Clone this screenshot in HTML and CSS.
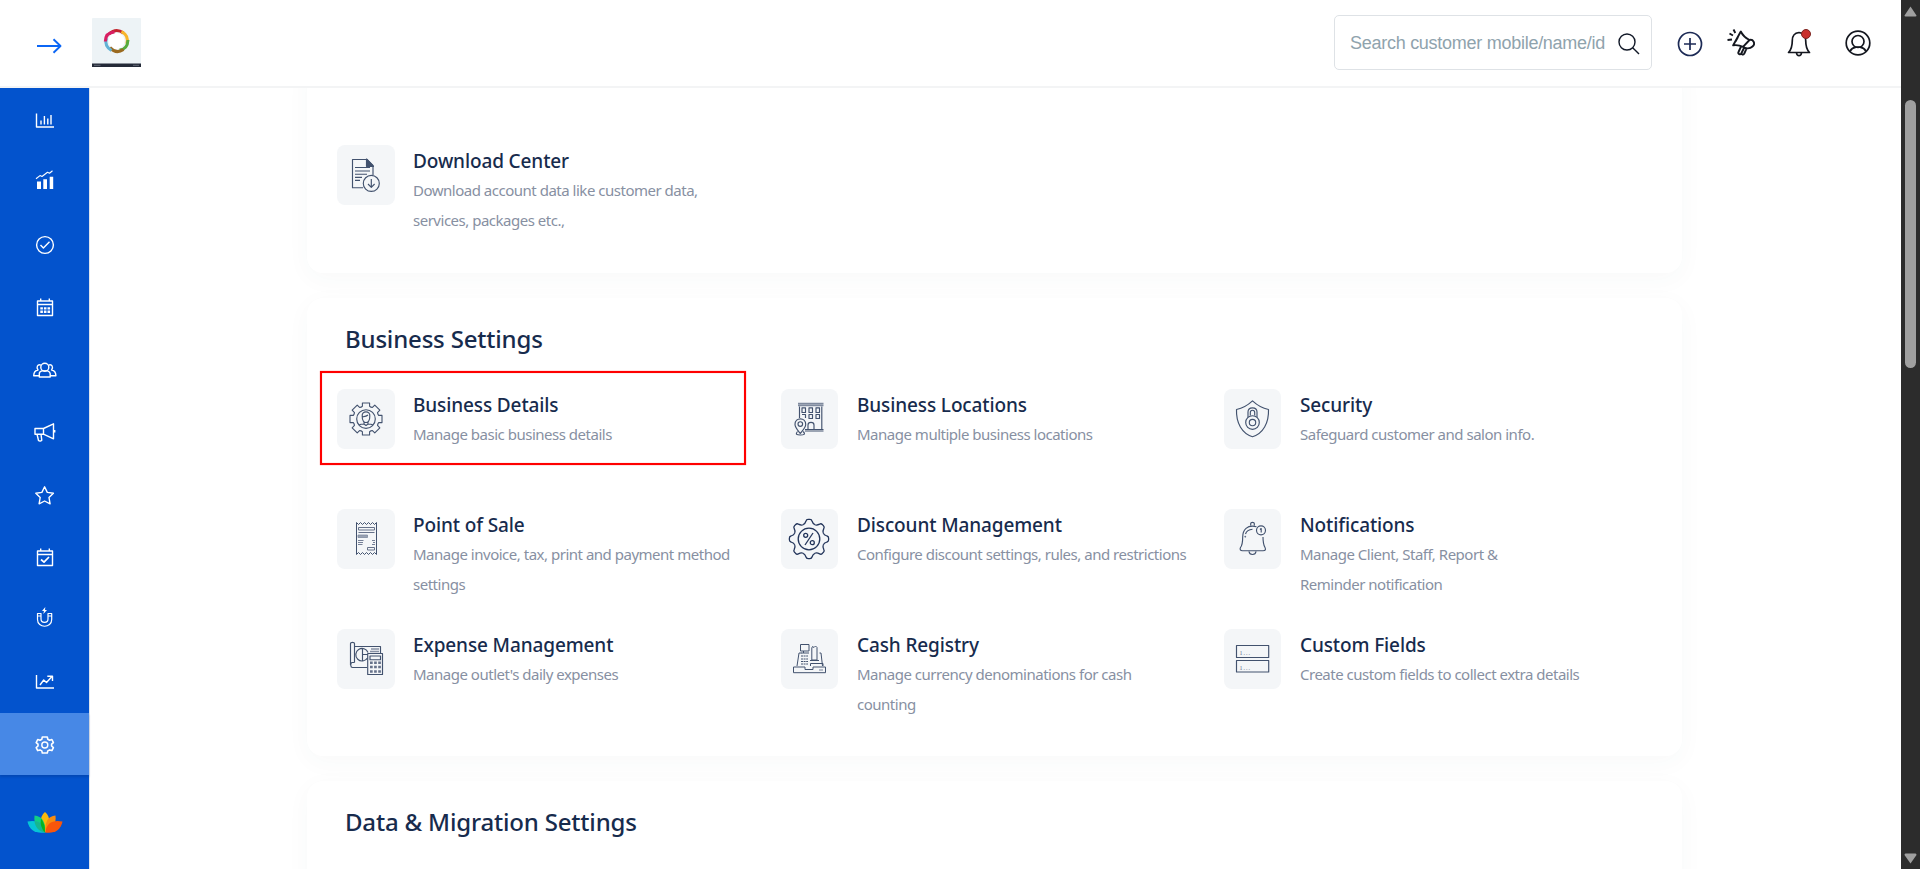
FILE: index.html
```html
<!DOCTYPE html>
<html lang="en">
<head>
<meta charset="utf-8">
<title>Settings</title>
<link rel="stylesheet" href="styles.css">
</head>
<body>
<div class="app">
  <div class="page">
    <header class="topbar">
      <svg class="toggle" width="26" height="16" viewBox="0 0 26 16"><path d="M1 8H24.5M17.5 1.3L24.5 8L17.5 14.7"/></svg>
      <svg class="brand" width="49" height="49" viewBox="0 0 49 49">
        <rect width="49" height="49" rx="1" fill="#edf3f6"/>
        <circle cx="24.500" cy="23" r="8" fill="#fff"/>
        <g fill="none" stroke-width="3">
          <path d="M17 16Q24 9.500 31.500 15" stroke="#c3242d"/>
          <path d="M29.500 13.500Q37.500 18 34.800 26" stroke="#f7b52c"/>
          <path d="M36 22Q35.500 31.500 27.500 32" stroke="#55ab3c"/>
          <path d="M31.500 31.500Q24 36.500 18 29.500" stroke="#9a6a20"/>
          <path d="M19.500 32.500Q12 28 14.500 20" stroke="#62b2d6"/>
          <path d="M13.300 23.500Q13.500 14.500 22.500 14" stroke="#d81e62"/>
        </g>
        <rect y="45.500" width="49" height="3.500" fill="#242a38"/>
        <path d="M2 47.300H8.500M41 47.300H47" stroke="#717887" stroke-width=".8"/>
      </svg>
      <div class="search">
        <span class="search-text">Search customer mobile/name/id</span>
        <svg width="22" height="22" viewBox="0 0 22 22"><circle cx="9" cy="9" r="8"/><path d="M14.700 14.700L21 21"/></svg>
      </div>
      <div class="actions">
        <svg class="navy" width="26" height="26" viewBox="0 0 26 26"><circle cx="13" cy="13" r="11.500"/><path d="M13 7V19M7 13H19"/></svg>
        <svg class="promo" width="28" height="28" viewBox="0 0 28 28"><path d="M13.800 3.500L6.200 17.300C10 16.800 13 17.300 16 18.800L22.500 12C18.500 10 15.500 7 13.800 3.500ZM22.500 12C26 11 29 15.500 25.500 18.500C23 21 18.500 21 16 18.800M17 20L14.500 25C13.500 27.500 10.500 26 11.500 24L14.300 18M19.500 20.600L17.300 25.500C16 27.500 14.500 26.500 14.500 25M8.500 13.500L11 9M6.500 1.500L8.300 5M2.500 5.500L6 7.500M.500 12L5 11.500"/></svg>
        <span class="bell">
          <svg width="24" height="27" viewBox="0 0 24 27"><path d="M12 2.500C7.500 3 5.300 6.500 5.300 10.500C5.300 16 4.500 19.500 1.500 22.500H22.500C19.500 19.500 18.700 16 18.700 10.500C18.700 6.500 16.500 3 12 2.500ZM9.500 23C10 26.500 14 26.500 14.500 23"/></svg>
          <i class="dot"></i>
        </span>
        <svg width="26" height="26" viewBox="0 0 26 26"><circle cx="13" cy="13" r="11.800"/><circle cx="13" cy="11.500" r="6"/><path d="M5 21.300C6.500 18.300 9 17.500 11 17.200H15C17 17.500 19.500 18.300 21 21.300"/></svg>
      </div>
    </header>
    <div class="body">
      <nav class="sidebar">
        <a><svg viewBox="0 0 25 25"><path d="M4.500 5.500V19H22"/><path d="M9 12.500V16.500M12.400 8V16.500M15.800 10.500V16.500M19 7V16.500" stroke-width="1.400"/></svg></a>
        <a><svg viewBox="0 0 25 25"><path d="M5 11.500H9V19H5ZM11.300 9.200H15V19H11.300ZM17.700 6.800H21.200V19H17.700Z" fill="#fff" stroke="none"/><path d="M4 8.700L8 5.600L10 6.500L15.500 2.200L17.500 3.200L20.500 .800" stroke-width="1.100"/></svg></a>
        <a><svg viewBox="0 0 25 25"><circle cx="13" cy="13" r="8.400"/><path d="M8.500 13L11.400 16L17.500 9.800"/></svg></a>
        <a><svg viewBox="0 0 25 25"><path d="M5.500 6H20.500V20.500H5.500ZM5.500 9.500H20.500M8.700 3.500V6M17.300 3.500V6"/><path d="M8.300 13.400H18.200M8.300 16.800H18.200" stroke-width="2.400" stroke-dasharray="2.600 1"/></svg></a>
        <a><svg viewBox="0 0 25 25"><g transform="translate(0 .7)"><circle cx="12.800" cy="9.500" r="4"/><path d="M7.300 19.300V16C7.300 14 9 13.500 10 13.200H15.600C17 13.700 18.200 14.200 18.200 16V19.300ZM9 7.400C5.500 6 4 9.500 6 12.300C3 12.800 1.800 14 1.700 18H7M16.600 7.400C20 6 21.600 9.500 19.600 12.300C22.600 12.800 23.800 14 23.900 18H18.500"/></g></svg></a>
        <a><svg viewBox="0 0 25 25"><path d="M3 8.500H11.500L21.500 3.800V18.800L11.500 14.200H3ZM11.500 8.500V14.200M5 14.200L6.500 20.500C7.500 21.500 9.500 21 9.800 20.300L9 14.200M22.700 10V12.500"/></svg></a>
        <a><svg viewBox="0 0 25 25"><path transform="translate(0 .8)" d="M12.600 4L15.300 9.600L21.400 10.500L17 14.700L18.100 21L12.600 18.200L7.100 21L8.200 14.700L3.800 10.500L9.900 9.600Z"/></svg></a>
        <a><svg viewBox="0 0 25 25"><g transform="translate(0 1)"><path d="M5.500 6H20.500V20.500H5.500ZM5.500 9.500H20.500M8.700 3.500V6M17.300 3.500V6"/><path d="M9 14.500L12 17.200L17 12" stroke-width="1.700"/></g></svg></a>
        <a><svg viewBox="0 0 25 25"><path d="M5.500 6.500H9V12C9 16.500 16 16.500 16 12V6.500H19.700V12.500C19.700 21.500 5.500 21.500 5.500 12.500ZM5.500 9H9M16 9H19.700" stroke-width="1.200"/><path d="M13.300 0L10 4H12L11.300 7L15 3H13Z" fill="#fff" stroke="none"/></svg></a>
        <a><svg viewBox="0 0 25 25"><path d="M4.500 6V19H22M8 16L11.700 11L14.500 13.500L19.500 8M15.300 7.200H20.500V12"/></svg></a>
        <a class="active"><svg viewBox="0 0 25 25"><circle cx="12.800" cy="13" r="3"/><path d="M10.300 5H15.300L15.800 7.300L17.600 8.300L19.900 7.500L21.400 10.600L19.600 12.200V14L21.400 15.600L19.900 18.600L17.600 17.900L15.800 18.900L15.300 21H10.300L9.800 18.900L8 17.900L5.700 18.600L4.200 15.600L6 14V12.200L4.200 10.600L5.700 7.500L8 8.300L9.800 7.300Z" stroke-linejoin="round" stroke-width="1.600"/></svg></a>
        <svg class="lotus" width="36" height="23" viewBox="0 0 36 23">
          <path d="M18 1C24 6 24 16 18 21.500C12 16 12 6 18 1Z" fill="#fbb90c"/>
          <path d="M7.500 4.500C15 5 19 11 18 21.500C10 20 6.500 12 7.500 4.500Z" fill="#12cf83"/>
          <path d="M28.500 4.500C21 5 17.500 11 18.500 21.500C26 20 29.500 12 28.500 4.500Z" fill="#f78c10"/>
          <path d="M.5 10.500C10 8.500 17 12 18 21.500C9 23 2 19 .5 10.500Z" fill="#06c5d6"/>
          <path d="M35.500 10.500C26 8.500 19 12 18.500 21.500C27 23 34 19 35.500 10.500Z" fill="#f8560c"/>
          <path d="M7.500 10C13.500 10.500 17 14 18 21.500C12 20.500 8 16 7.500 10Z" fill="#17b78e"/>
          <path d="M14 7.500Q18.500 13 18 21.500Q12.500 16 14 7.500Z" fill="#06b41e"/>
        </svg>
      </nav>
      <main class="content">
        <section class="card card-first">
          <div class="grid">
            <div class="item">
              <span class="tile"><svg viewBox="0 0 58 60"><path d="M26 42.700H15.500V14.500H30L36 20.500V30M18 22.500H33M18 26H33M18 29.200H30M18 32.300H25M18 35.300H23"/><path d="M29.500 14V21.300H36.500Z" fill="#42526e"/><circle cx="34.300" cy="38.400" r="8" /><path d="M34.300 34V42M31 39L34.300 42.300L37.600 39"/></svg></span>
              <div class="text"><h3>Download Center</h3><p>Download account data like customer data,<br>services, packages etc.,</p></div>
            </div>
          </div>
        </section>
        <section class="card">
          <h2>Business Settings</h2>
          <div class="grid">
            <div class="item marked">
              <span class="tile"><svg viewBox="0 0 58 60"><g transform="translate(29 30)"><g stroke-width="1.100"><path id="tooth" d="M-5 -11.800L-3.600 -12.700V-16H3.600V-12.700L5 -11.800"/><use href="#tooth" transform="rotate(45)"/><use href="#tooth" transform="rotate(90)"/><use href="#tooth" transform="rotate(135)"/><use href="#tooth" transform="rotate(180)"/><use href="#tooth" transform="rotate(225)"/><use href="#tooth" transform="rotate(270)"/><use href="#tooth" transform="rotate(315)"/></g><circle r="9.300"/><path d="M-3.800 -3C-4.500 -8.500 4.500 -8.500 3.800 -3C4 2.500 1.500 3.500 0 3.500S-4 2.500 -3.800 -3ZM-3.800 -2C-1 -2.500 1 -3 2 -4M-2 3V5L0 6.500L2 5V3M-7 6C-5.500 5 -4 5 -2 5M7 6C5.500 5 4 5 2 5"/></g></svg></span>
              <div class="text"><h3>Business Details</h3><p>Manage basic business details</p></div>
            </div>
            <div class="item">
              <span class="tile"><svg viewBox="0 0 58 60"><path d="M17 14.700H42.500M17 16.500H42.500" stroke-width="1.700" stroke="#7f8a9e"/><path d="M18.500 17.500V29M40.800 17.500V40.500M24 40.500H42.500M24 42H42.500"/><path d="M21 18.800H24.500V23.500H21ZM28 18.800H31.500V23.500H28ZM35 18.800H38.500V23.500H35ZM21 25.500H24.500V29M28 25.500H31.500V29.500H28ZM35 25.500H38.500V29.500H35ZM27 40V36C27 32.500 33 32.500 33 36V40"/><path d="M19.300 44.500C17 41.500 14 38.500 14 35.500C14 28 24.700 28 24.700 35.500C24.700 38.500 21.500 41.500 19.300 44.500ZM16.500 42.500C14 45.500 16 46 19.300 46S25 45.500 22.200 42.500"/><circle cx="19.300" cy="35" r="2.300"/></svg></span>
              <div class="text"><h3>Business Locations</h3><p>Manage multiple business locations</p></div>
            </div>
            <div class="item">
              <span class="tile"><svg viewBox="0 0 58 60"><path d="M28.500 11.800C24 16 17 19.500 12.500 20.500C12 34 18 44.500 28.500 47.700C39 44.500 45 34 44.500 20.500C40 19.500 33 16 28.500 11.800Z"/><circle cx="28.500" cy="33.500" r="6.800"/><circle cx="28.500" cy="33.500" r="3.200"/><path d="M24 28V23C24 17.500 33 17.500 33 23V28M26.300 26.500V23.500C26.300 20.500 30.700 20.500 30.700 23.500V26.500"/></svg></span>
              <div class="text"><h3>Security</h3><p>Safeguard customer and salon info.</p></div>
            </div>
            <div class="item">
              <span class="tile"><svg viewBox="0 0 58 60"><path d="M19.500 13.500V45.500M39.500 13.500V45.500M19.500 13.500L21.500 15.500L23.500 13.500L25.500 15.500L27.500 13.500L29.500 15.500L31.500 13.500L33.500 15.500L35.500 13.500L37.500 15.500L39.500 13.500M19.500 45.500L21.500 43.500L23.500 45.500L25.500 43.500L27.500 45.500L29.500 43.500L31.500 45.500L33.500 43.500L35.500 45.500L37.500 43.500L39.500 45.500" stroke-width="1"/><path d="M21.500 18.500H37.500V21H21.500ZM21.500 23.500H37.500M30.500 38.500H37.500V41H30.500Z" stroke="#66728a" stroke-width="1"/><path d="M21 26H30.500V28.500H21Z" fill="#99a2b3" stroke="#7f8a9e" stroke-width=".8"/><path d="M21 31.500H26.500M21 33.500H26M21 35.500H25.500M35 31.500H38M36 33.500H38M35 35.500H38" stroke="#66728a" stroke-width=".9"/></svg></span>
              <div class="text"><h3>Point of Sale</h3><p>Manage invoice, tax, print and payment method<br>settings</p></div>
            </div>
            <div class="item">
              <span class="tile"><svg class="strong" viewBox="0 0 58 60"><g transform="translate(28 30)"><path id="cog" d="M-5.900 -14.300C-4 -15 -3.500 -16.500 -3 -18C-2.500 -20 -2 -19.600 0 -19.600S2.500 -20 3 -18C3.500 -16.500 4 -15 5.900 -14.300"/><use href="#cog" transform="rotate(45)"/><use href="#cog" transform="rotate(90)"/><use href="#cog" transform="rotate(135)"/><use href="#cog" transform="rotate(180)"/><use href="#cog" transform="rotate(225)"/><use href="#cog" transform="rotate(270)"/><use href="#cog" transform="rotate(315)"/><circle r="10.800"/><circle cx="-3.300" cy="-3.700" r="2"/><circle cx="3.300" cy="3.700" r="2"/><path d="M4 -6L-4 6"/></g></svg></span>
              <div class="text"><h3>Discount Management</h3><p>Configure discount settings, rules, and restrictions</p></div>
            </div>
            <div class="item">
              <span class="tile"><svg viewBox="0 0 58 60"><path d="M32.500 17.700C23 15.500 18.700 21 18.700 28C18.700 34 18.500 36 16.500 38.500C15.500 40.500 16.500 41.700 18.500 41.700H39C41.500 41.700 42 40.500 41 38.500C39.500 36 39 34 39 28M25 42.500C25.500 46.500 31.500 46.500 32 42.500M26.700 16.500V14.500C26.700 13 30.300 13 30.300 14.500V16.500M21.500 25C22.500 22 25 20.500 28.500 20.300"/><circle cx="37" cy="21.300" r="4.500"/><path d="M36 20.500L37.200 19.500V23.500"/><circle cx="21.300" cy="27.500" r=".3"/></svg></span>
              <div class="text"><h3>Notifications</h3><p>Manage Client, Staff, Report &amp;<br>Reminder notification</p></div>
            </div>
            <div class="item">
              <span class="tile"><svg viewBox="0 0 58 60"><path d="M17.500 33.500V14.500C17.500 13 13.500 13 13.500 14.500V36M17.500 17.500H43.500V24M17.500 33.500H15C13 34.500 13.500 38.500 15.500 38.500H30M31 23.500A6.300 6.300 0 1 0 30.500 29M25.500 19.500V32M25.500 25.500H31"/><path d="M34 20H42M33 22.500H42" stroke="#8791a4" stroke-width="1.400"/><path d="M30.700 24.500H45.500V45.500H30.700ZM33 27H43.500V30.700H33Z"/><path d="M33 33.700H44M33 38H44M33 42.500H44" stroke-width="2.500" stroke-dasharray="2.700 1.400" stroke="#66728a"/></svg></span>
              <div class="text"><h3>Expense Management</h3><p>Manage outlet's daily expenses</p></div>
            </div>
            <div class="item">
              <span class="tile"><svg viewBox="0 0 58 60"><path d="M12.500 38H24V40.500H32V38H44.500V43.700H12.500ZM16 37L18 24H20.500M19.500 15.500H28V22H19.500ZM22.500 22V24M20 24H28M30.800 31V19L31.500 17.500L33 18.500L34.500 17L36 18.500V31ZM29 31.500H38M38.500 24H40L41.500 37M29.500 37V34.500H42V37" stroke-width="1"/><path d="M20 27H27M20 30H27M20 32.500H27M20 35H27" stroke-dasharray="2 .6" stroke-width="1"/><path d="M38 41H42" stroke="#8791a4"/></svg></span>
              <div class="text"><h3>Cash Registry</h3><p>Manage currency denominations for cash<br>counting</p></div>
            </div>
            <div class="item">
              <span class="tile"><svg viewBox="0 0 58 60"><path d="M12.500 16.500H44.700V28.500H12.500ZM12.500 31.500H44.700V43H12.500Z"/><text x="15.500" y="26">1...</text><text x="15.500" y="40.500">1...</text></svg></span>
              <div class="text"><h3>Custom Fields</h3><p>Create custom fields to collect extra details</p></div>
            </div>
          </div>
        </section>
        <section class="card card-last">
          <h2>Data &amp; Migration Settings</h2>
        </section>
      </main>
    </div>
  </div>
  <div class="scrollbar">
    <svg width="13" height="11" viewBox="0 0 13 11"><path d="M6.500 .5L12.500 9.500Q12.500 10.500 11.500 10.500H1.500Q.5 10.500 .5 9.500Z"/></svg>
    <span class="thumb"></span>
    <svg class="down" width="13" height="11" viewBox="0 0 13 11"><path d="M6.500 10.500L12.500 2Q12.500 .5 11.500 .5H1.500Q.5 .5 .5 2Z"/></svg>
  </div>
</div>
</body>
</html>
```
FILE: styles.css
```css
*, *::after { box-sizing: border-box; }
body { margin: 0; background: #fff; font-family: "Noto Sans", "Open Sans", sans-serif; }
svg { display: block; flex: none; fill: none; stroke-linejoin: round; }
.app { display: flex; width: 1920px; height: 869px; overflow: hidden; }
.page { width: 1901px; display: flex; flex-direction: column; }

.topbar { height: 88px; flex: none; display: flex; align-items: flex-start; padding: 0 30px 0 36px; background: #fff; border-bottom: 2px solid #f3f4f5; }
.toggle { margin-top: 38px; stroke: #0b66f5; stroke-width: 1.9; }
.brand { margin: 18px 0 0 30px; }
.search { margin: 15px 0 0 auto; width: 318px; height: 55px; display: flex; align-items: center; justify-content: space-between; padding: 2px 11px 0 15px; border: 1px solid #dee2e6; border-radius: 5px; }
.search svg { stroke: #111827; stroke-width: 1.4; }
.search-text { font: 18px "Liberation Sans", sans-serif; color: #8fa3ad; letter-spacing: -.27px; white-space: nowrap; }
.actions { display: flex; margin: 30px 0 0 25px; stroke: #14171f; stroke-width: 1.7; }
.actions .navy { stroke: #1c2a55; margin-right: 24px; margin-top: 1px; }
.actions .promo { margin: -2px 32px 0 0; stroke-width: 1.9; }
.bell { position: relative; margin-right: 34px; }
.dot { position: absolute; left: 14px; top: -1px; width: 10px; height: 10px; border-radius: 50%; background: #c9302c; border: 1px solid #7d2420; }

.body { display: flex; flex: 1; min-height: 0; }
.sidebar { width: 90px; flex: none; padding-top: 1px; display: flex; flex-direction: column; background: #0353cd; border-right: 1px solid #dfe4ec; }
.sidebar a { height: 62.4px; flex: none; display: flex; align-items: center; justify-content: center; }
.sidebar a svg { width: 25px; height: 25px; stroke: #fff; stroke-width: 1.4; }
.sidebar a.active { background: #4788e6; box-shadow: 0 2px 2px rgba(0, 40, 110, .25); }
.lotus { margin: 36px 0 0 27px; }

.content { flex: 1; overflow: hidden; padding-left: 217px; }
.card { width: 1375px; background: #fff; border-radius: 16px; box-shadow: 0 6px 24px rgba(60, 75, 90, .035); }
.card + .card { margin-top: 25px; }
.card-first { height: 215px; margin-top: -30px; padding-top: 87px; }
.card h2 { margin: 0; padding: 24px 0 0 38px; height: 91px; font-size: 24px; line-height: 34px; font-weight: 500; letter-spacing: -.18px; color: #172b4d; }
.card:nth-child(2) { height: 458px; }
.card-last { height: 200px; }
.grid { display: grid; grid-template-columns: 444px 443px 443px; grid-auto-rows: 120px; padding-left: 30px; }
.item { display: flex; position: relative; }
.tile { width: 57px; height: 60px; flex: none; border-radius: 8px; background: #f4f6f8; }
.item:nth-child(3n + 1) .tile { width: 58px; }
.tile svg { width: 58px; height: 60px; stroke: #42526e; stroke-width: 1.15; }
.tile svg.strong { stroke: #22345a; stroke-width: 1.3; }
.tile text { font: 6px "Liberation Serif", serif; fill: #66728a; stroke: none; letter-spacing: 1px; }
.text { margin-left: 19px; white-space: nowrap; }
.item:nth-child(3n + 1) .text { margin-left: 18px; }
.item h3 { margin: 2px 0 0; font-size: 19px; line-height: 28px; font-weight: 500; letter-spacing: -.12px; color: #172b4d; }
.item p { margin: 0; font-size: 15px; line-height: 30px; letter-spacing: -.49px; color: #8790a2; }
.marked::after { content: ""; position: absolute; left: -17px; top: -18px; width: 426px; height: 94px; border: 2px solid #f00; box-shadow: 0 0 1px rgba(255, 0, 0, .6), inset 0 0 1px rgba(255, 0, 0, .6); }

.scrollbar { width: 19px; display: flex; flex-direction: column; align-items: center; padding: 6px 0 5px; background: #2c2c2c; }
.scrollbar svg { fill: #9f9f9f; }
.thumb { width: 11px; height: 268px; margin-top: 83px; border-radius: 6px; background: #9f9f9f; }
.down { margin-top: auto; }
```
